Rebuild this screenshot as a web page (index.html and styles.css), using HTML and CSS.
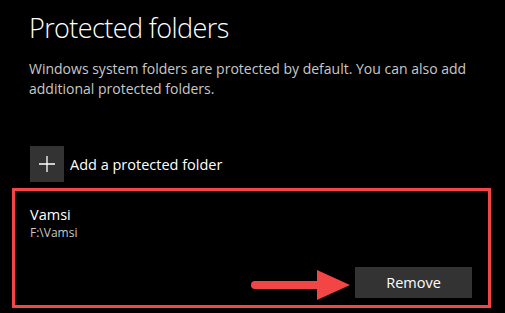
FILE: index.html
```html
<!DOCTYPE html>
<html>
<head>
<meta charset="utf-8">
<link rel="stylesheet" href="styles.css">
</head>
<body>
<div class="page">
  <section class="intro">
    <h1 class="title">Protected folders</h1>
    <p class="desc">Windows system folders are protected by default. You can also add additional protected folders.</p>
  </section>
  <div class="add-row">
    <span class="add-icon">
      <svg width="18" height="18" viewBox="0 0 18 18"><path d="M9 1v16M1 9h16" stroke="#fff" stroke-width="1.3" fill="none"/></svg>
    </span>
    <span class="add-label">Add a protected folder</span>
  </div>
  <div class="item">
    <div class="item-name">Vamsi</div>
    <div class="item-path">F:\Vamsi</div>
    <div class="item-actions">
      <svg class="arrow" width="100" height="32" viewBox="0 0 100 32"><path d="M4 16H70" stroke="#f24545" stroke-width="8" stroke-linecap="round"/><polygon points="66,1 99,16 66,31" fill="#f24545"/></svg>
      <button class="remove">Remove</button>
    </div>
  </div>
</div>
</body>
</html>
```
FILE: styles.css
```css
html, body {
  margin: 0;
  padding: 0;
  background: #000;
}
body {
  width: 505px;
  height: 313px;
  overflow: hidden;
  font-family: "Open Sans", "Noto Sans", sans-serif;
  color: #fff;
}
.intro {
  padding: 0 20px 0 29px;
}
.title {
  margin: 0;
  padding-top: 10px;
  font-size: 27px;
  font-weight: 300;
  line-height: 36px;
  letter-spacing: -0.6px;
}
.desc {
  margin: 13px 0 0;
  font-size: 14px;
  line-height: 20px;
  color: #c8c8c8;
  width: 460px;
}
.add-row {
  display: flex;
  align-items: center;
  gap: 6px;
  margin: 47px 0 0 30px;
}
.add-icon {
  width: 34px;
  height: 36px;
  background: #333;
  display: flex;
  align-items: center;
  justify-content: center;
}
.add-label {
  font-size: 14.5px;
}
.item {
  margin: 6px 14px 0 12px;
  height: 120px;
  border: 3px solid #f24545;
  padding: 14px 0 0 15px;
  box-sizing: border-box;
  position: relative;
}
.item-name {
  font-size: 14.5px;
  line-height: 20px;
}
.item-path {
  font-size: 12px;
  line-height: 16px;
  color: #c8c8c8;
}
.item-actions {
  display: flex;
  justify-content: flex-end;
  padding-right: 16px;
  margin-top: 26px;
}
.remove {
  width: 117px;
  height: 31px;
  background: #333;
  border: none;
  color: #fff;
  font-family: "Open Sans", "Noto Sans", sans-serif;
  font-size: 14.5px;
  padding: 0;
}
.arrow {
  position: absolute;
  left: 236px;
  top: 78px;
}
```
